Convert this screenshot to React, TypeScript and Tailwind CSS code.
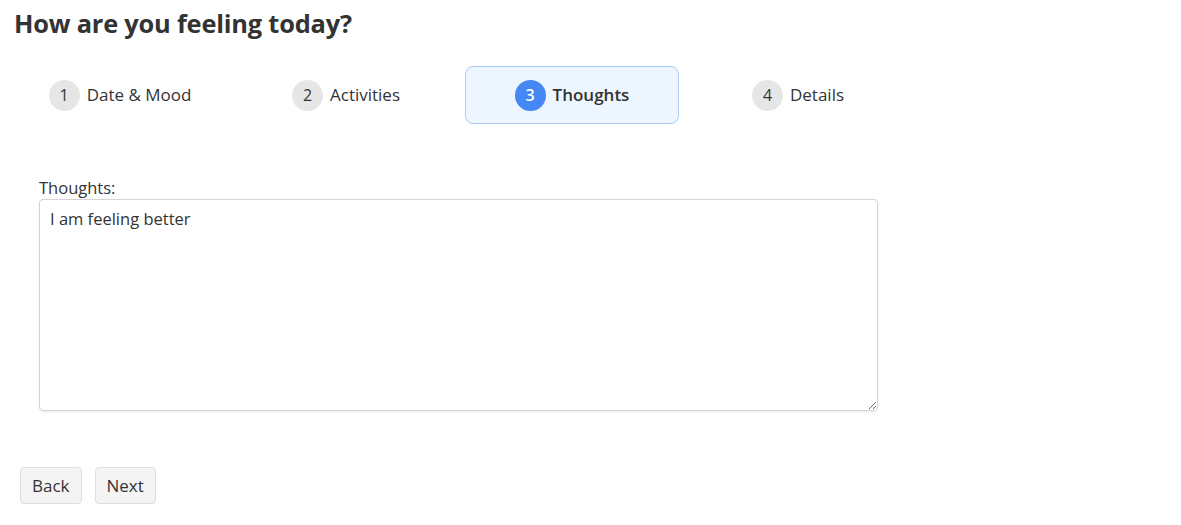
const steps = [
  { n: 1, label: 'Date & Mood' },
  { n: 2, label: 'Activities' },
  { n: 3, label: 'Thoughts' },
  { n: 4, label: 'Details' },
]

const active = 3

export default function App() {
  return (
    <main
      className="min-h-screen bg-white text-[#333]"
      style={{ fontFamily: '"Open Sans", "Noto Sans", sans-serif' }}
    >
      <h1 className="px-[14px] pt-[5px] text-[25.4px] leading-[36px] font-bold tracking-[-0.2px]">
        How are you feeling today?
      </h1>

      <ol className="mt-[25px] ml-[13px] grid w-[892px] grid-cols-4 gap-[12px]">
        {steps.map((step) => {
          const isActive = step.n === active
          return (
            <li
              key={step.n}
              className={
                isActive
                  ? 'flex h-[58px] items-center justify-center gap-[7px] rounded-[8px] border border-[#a9cdf6] bg-[#edf5fe]'
                  : 'flex h-[58px] items-center justify-center gap-[7px] rounded-[8px] border border-transparent'
              }
            >
              <span
                className={
                  isActive
                    ? 'flex h-[31px] w-[31px] items-center justify-center rounded-full bg-[#4587f5] text-[16px] font-semibold text-white'
                    : 'flex h-[31px] w-[31px] items-center justify-center rounded-full bg-[#e6e6e6] text-[16px]'
                }
              >
                {step.n}
              </span>
              <span className={isActive ? 'text-[17px] font-semibold' : 'text-[17px]'}>
                {step.label}
              </span>
            </li>
          )
        })}
      </ol>

      <section className="mt-[52px] ml-[39px] w-[839px]">
        <label className="block text-[16.5px] leading-[23px]">Thoughts:</label>
        <textarea
          className="block h-[212px] w-full resize-y rounded-[4px] border border-[#d4d4d4] px-[10px] py-[7px] text-[16.5px] leading-[24px] text-[#333] shadow-[0_1px_2px_rgba(0,0,0,0.08)] outline-none"
          defaultValue="I am feeling better"
        />
      </section>

      <div className="mt-[56px] ml-[20px] flex gap-[13px]">
        <button className="h-[37px] rounded-[4px] border border-[#dedede] bg-[#f4f4f4] px-[11px] text-[17px]">
          Back
        </button>
        <button className="h-[37px] rounded-[4px] border border-[#dedede] bg-[#f4f4f4] px-[11px] text-[17px]">
          Next
        </button>
      </div>
    </main>
  )
}
